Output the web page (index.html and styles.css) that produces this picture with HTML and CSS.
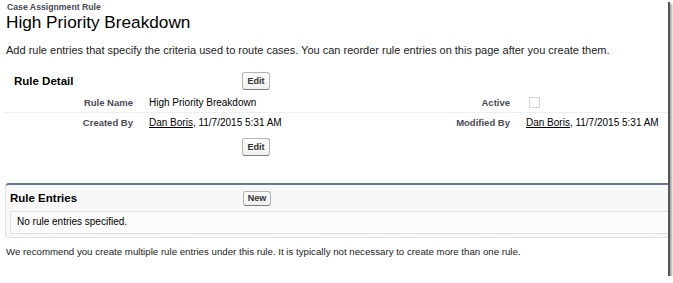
FILE: index.html
```html
<!DOCTYPE html>
<html lang="en">
<head>
    <meta charset="UTF-8">
    <title>High Priority Breakdown</title>
    <link rel="stylesheet" href="styles.css">
</head>
<body>
    <div class="shot">
        <div class="page-head">
            <div class="page-type">Case Assignment Rule</div>
            <h1 class="page-title">High Priority Breakdown</h1>
        </div>
        <p class="intro">Add rule entries that specify the criteria used to route cases. You can reorder rule entries on this page after you create them.</p>

        <div class="detail">
            <div class="detail-head">
                <h2>Rule Detail</h2>
                <button class="btn">Edit</button>
            </div>
            <div class="row first">
                <span class="label">Rule Name</span>
                <span class="value">High Priority Breakdown</span>
                <span class="label">Active</span>
                <span class="value"><span class="check"></span></span>
            </div>
            <div class="row">
                <span class="label">Created By</span>
                <span class="value"><a href="#">Dan Boris</a>, 11/7/2015 5:31 AM</span>
                <span class="label">Modified By</span>
                <span class="value"><a href="#">Dan Boris</a>, 11/7/2015 5:31 AM</span>
            </div>
            <div class="detail-foot">
                <button class="btn">Edit</button>
            </div>
        </div>

        <div class="related">
            <div class="related-head">
                <h3>Rule Entries</h3>
                <button class="btn small">New</button>
            </div>
            <div class="empty">No rule entries specified.</div>
        </div>

        <p class="note">We recommend you create multiple rule entries under this rule. It is typically not necessary to create more than one rule.</p>
    </div>
</body>
</html>
```

FILE: styles.css
```css
body { margin: 0; background: #fff; font-family: "Liberation Sans", Arial, sans-serif; color: #222; }
.shot { width: 668px; height: 276px; box-sizing: border-box; background: #fff; box-shadow: 2px 2px 0 #555, 4px 4px 2px rgba(0,0,0,0.35); overflow: hidden; }

.page-head { padding: 3px 0 0 6px; }
.page-type { font-size: 8.7px; font-weight: bold; color: #4a4a56; line-height: 9px; padding-left: 1px; }
.page-title { margin: 0; font-size: 17.2px; font-weight: normal; color: #000; line-height: 20px; }
.intro { margin: 11px 0 0 6px; font-size: 11px; line-height: 14px; color: #222; }

.detail { margin-top: 14px; padding-left: 5px; }
.detail-head { display: flex; align-items: center; height: 20px; }
.detail-head h2 { margin: 0; width: 237px; padding-left: 9px; box-sizing: border-box; font-size: 11.5px; color: #000; }

.btn { font-family: "Liberation Sans", Arial, sans-serif; font-size: 9px; font-weight: bold; color: #333; background: linear-gradient(#fff, #f0f0f0); border: 1px solid #b5b5b5; border-bottom-color: #7f7f7f; border-radius: 3px; padding: 0; width: 28px; height: 18px; cursor: pointer; }
.btn.small { height: 15px; }

.row { display: grid; grid-template-columns: 128px 200px 177px 1fr; align-items: center; height: 20px; font-size: 10px; }
.row.first { margin-top: 1px; }
.row + .row { border-top: 1px solid #eceef0; height: 19px; }
.label { text-align: right; font-weight: bold; color: #4a4a56; font-size: 9.5px; }
.value { padding-left: 16px; color: #000; white-space: nowrap; }
.value a { color: #000; text-decoration: underline; }
.check { display: inline-block; width: 9px; height: 9px; border: 1px solid #d4d4d4; background: #fff; vertical-align: middle; margin-left: 3px; }
.detail-foot { display: flex; padding: 6px 0 0 237px; }

.related { margin: 27px 0 0 5px; background: #f8f8f8; border: 1px solid #e0e3e5; border-top: 2px solid #6a7890; border-right: 0; border-radius: 4px 0 0 4px; padding: 0 0 3px 4px; }
.related-head { display: flex; align-items: center; height: 26px; }
.related-head h3 { margin: 0; width: 233px; font-size: 11.5px; color: #000; }
.empty { background: #fbfbfb; border: 1px solid #e0e3e5; border-right: 0; font-size: 10px; color: #000; padding: 4px 6px 5px; line-height: 12px; }

.note { margin: 8px 0 0 6px; font-size: 9.7px; color: #222; }
```
